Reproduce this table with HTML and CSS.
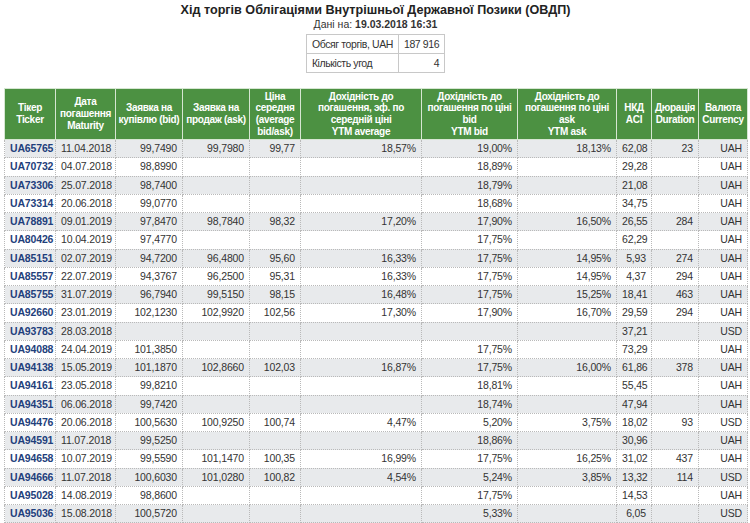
FILE: index.html
```html
<!DOCTYPE html>
<html lang="uk">
<head>
<meta charset="utf-8">
<title>ОВДП</title>
<link rel="stylesheet" href="styles.css">
</head>
<body>
<h1 class="title">Хід торгів Облігаціями Внутрішньої Державної Позики (ОВДП)</h1>
<div class="subtitle">Дані на: <b>19.03.2018 16:31</b></div>
<table class="summary">
<tr><td>Обсяг торгів, UAH</td><td class="num">187 916</td></tr>
<tr><td>Кількість угод</td><td class="num">4</td></tr>
</table>
<table class="bonds">
<colgroup>
<col class="c1"><col class="c2"><col class="c3"><col class="c4"><col class="c5"><col class="c6"><col class="c7"><col class="c8"><col class="c9"><col class="c10"><col class="c11">
</colgroup>
<thead>
<tr>
<th>Тікер<br>Ticker</th>
<th>Дата<br>погашення<br>Maturity</th>
<th>Заявка на купівлю (bid)</th>
<th>Заявка на продаж (ask)</th>
<th>Ціна середня (average bid/ask)</th>
<th>Дохідність до погашення, эф. по середній ціні<br>YTM average</th>
<th>Дохідність до погашення по ціні bid<br>YTM bid</th>
<th>Дохідність до погашення по ціні ask<br>YTM ask</th>
<th>НКД<br>ACI</th>
<th>Дюрація<br>Duration</th>
<th>Валюта<br>Currency</th>
</tr>
</thead>
<tbody>
<tr><td class="tk">UA65765</td><td class="dt">11.04.2018</td><td>99,7490</td><td>99,7980</td><td>99,77</td><td>18,57%</td><td>19,00%</td><td>18,13%</td><td>62,08</td><td>23</td><td>UAH</td></tr>
<tr><td class="tk">UA70732</td><td class="dt">04.07.2018</td><td>98,8990</td><td></td><td></td><td></td><td>18,89%</td><td></td><td>29,28</td><td></td><td>UAH</td></tr>
<tr><td class="tk">UA73306</td><td class="dt">25.07.2018</td><td>98,7400</td><td></td><td></td><td></td><td>18,79%</td><td></td><td>21,08</td><td></td><td>UAH</td></tr>
<tr><td class="tk">UA73314</td><td class="dt">20.06.2018</td><td>99,0770</td><td></td><td></td><td></td><td>18,68%</td><td></td><td>34,75</td><td></td><td>UAH</td></tr>
<tr><td class="tk">UA78891</td><td class="dt">09.01.2019</td><td>97,8470</td><td>98,7840</td><td>98,32</td><td>17,20%</td><td>17,90%</td><td>16,50%</td><td>26,55</td><td>284</td><td>UAH</td></tr>
<tr><td class="tk">UA80426</td><td class="dt">10.04.2019</td><td>97,4770</td><td></td><td></td><td></td><td>17,75%</td><td></td><td>62,29</td><td></td><td>UAH</td></tr>
<tr><td class="tk">UA85151</td><td class="dt">02.07.2019</td><td>94,7200</td><td>96,4800</td><td>95,60</td><td>16,33%</td><td>17,75%</td><td>14,95%</td><td>5,93</td><td>274</td><td>UAH</td></tr>
<tr><td class="tk">UA85557</td><td class="dt">22.07.2019</td><td>94,3767</td><td>96,2500</td><td>95,31</td><td>16,33%</td><td>17,75%</td><td>14,95%</td><td>4,37</td><td>294</td><td>UAH</td></tr>
<tr><td class="tk">UA85755</td><td class="dt">31.07.2019</td><td>96,7940</td><td>99,5150</td><td>98,15</td><td>16,48%</td><td>17,75%</td><td>15,25%</td><td>18,41</td><td>463</td><td>UAH</td></tr>
<tr><td class="tk">UA92660</td><td class="dt">23.01.2019</td><td>102,1230</td><td>102,9920</td><td>102,56</td><td>17,30%</td><td>17,90%</td><td>16,70%</td><td>29,59</td><td>294</td><td>UAH</td></tr>
<tr><td class="tk">UA93783</td><td class="dt">28.03.2018</td><td></td><td></td><td></td><td></td><td></td><td></td><td>37,21</td><td></td><td>USD</td></tr>
<tr><td class="tk">UA94088</td><td class="dt">24.04.2019</td><td>101,3850</td><td></td><td></td><td></td><td>17,75%</td><td></td><td>73,29</td><td></td><td>UAH</td></tr>
<tr><td class="tk">UA94138</td><td class="dt">15.05.2019</td><td>101,1870</td><td>102,8660</td><td>102,03</td><td>16,87%</td><td>17,75%</td><td>16,00%</td><td>61,86</td><td>378</td><td>UAH</td></tr>
<tr><td class="tk">UA94161</td><td class="dt">23.05.2018</td><td>99,8210</td><td></td><td></td><td></td><td>18,81%</td><td></td><td>55,45</td><td></td><td>UAH</td></tr>
<tr><td class="tk">UA94351</td><td class="dt">06.06.2018</td><td>99,7420</td><td></td><td></td><td></td><td>18,74%</td><td></td><td>47,94</td><td></td><td>UAH</td></tr>
<tr><td class="tk">UA94476</td><td class="dt">20.06.2018</td><td>100,5630</td><td>100,9250</td><td>100,74</td><td>4,47%</td><td>5,20%</td><td>3,75%</td><td>18,02</td><td>93</td><td>USD</td></tr>
<tr><td class="tk">UA94591</td><td class="dt">11.07.2018</td><td>99,5250</td><td></td><td></td><td></td><td>18,86%</td><td></td><td>30,96</td><td></td><td>UAH</td></tr>
<tr><td class="tk">UA94658</td><td class="dt">10.07.2019</td><td>99,5590</td><td>101,1470</td><td>100,35</td><td>16,99%</td><td>17,75%</td><td>16,25%</td><td>31,02</td><td>437</td><td>UAH</td></tr>
<tr><td class="tk">UA94666</td><td class="dt">11.07.2018</td><td>100,6030</td><td>101,0280</td><td>100,82</td><td>4,54%</td><td>5,24%</td><td>3,85%</td><td>13,32</td><td>114</td><td>USD</td></tr>
<tr><td class="tk">UA95028</td><td class="dt">14.08.2019</td><td>98,8600</td><td></td><td></td><td></td><td>17,75%</td><td></td><td>14,53</td><td></td><td>UAH</td></tr>
<tr><td class="tk">UA95036</td><td class="dt">15.08.2018</td><td>100,5720</td><td></td><td></td><td></td><td>5,33%</td><td></td><td>6,05</td><td></td><td>USD</td></tr>
</tbody>
</table>
</body>
</html>
```
FILE: styles.css
```css
html, body {
  margin: 0;
  padding: 0;
  background: #fff;
}
body {
  padding: 2px 3px 0 4px;
  font-family: "Liberation Sans", Arial, sans-serif;
  color: #333;
}
.title {
  margin: 0;
  font-size: 12.6px;
  line-height: 16px;
  font-weight: bold;
  text-align: center;
  color: #222;
}
.subtitle {
  font-size: 10.5px;
  line-height: 13px;
  text-align: center;
  color: #333;
}
.summary {
  margin: 3px auto 0;
  border-collapse: collapse;
  font-size: 10.5px;
  letter-spacing: -0.4px;
  border: 1px solid #c8c8c8;
  width: 135px;
}
.summary td {
  border: 1px solid #c8c8c8;
  height: 18px;
  padding: 0 5px;
  white-space: nowrap;
  color: #333;
}
.summary td.num {
  text-align: right;
  width: 34px;
}
.bonds {
  margin-top: 15px;
  width: 743px;
  table-layout: fixed;
  border-collapse: collapse;
  font-size: 10.5px;
  letter-spacing: -0.15px;
}
.c1 { width: 51px; }
.c2 { width: 60px; }
.c3 { width: 67px; }
.c4 { width: 67px; }
.c5 { width: 51px; }
.c6 { width: 121px; }
.c7 { width: 96px; }
.c8 { width: 99px; }
.c9 { width: 35px; }
.c10 { width: 47px; }
.c11 { width: 49px; }
.bonds th {
  background: #4c9142;
  color: #fff;
  font-weight: bold;
  font-size: 10px;
  letter-spacing: -0.3px;
  line-height: 11.7px;
  height: 50px;
  padding: 0 2px;
  text-align: center;
  vertical-align: middle;
  border: 1px solid #d6e6d2;
}
.bonds td {
  height: 17.25px;
  padding: 0 5px;
  text-align: right;
  border: 1px dotted #b9b9b9;
  white-space: nowrap;
  color: #333;
  line-height: 13px;
}
.bonds tbody tr:nth-child(odd) td {
  background: #e8eaec;
}
.bonds td.tk {
  text-align: left;
  font-weight: bold;
  color: #1f3f7c;
  padding-left: 5px;
}
.bonds td.dt {
  text-align: center;
}
```
